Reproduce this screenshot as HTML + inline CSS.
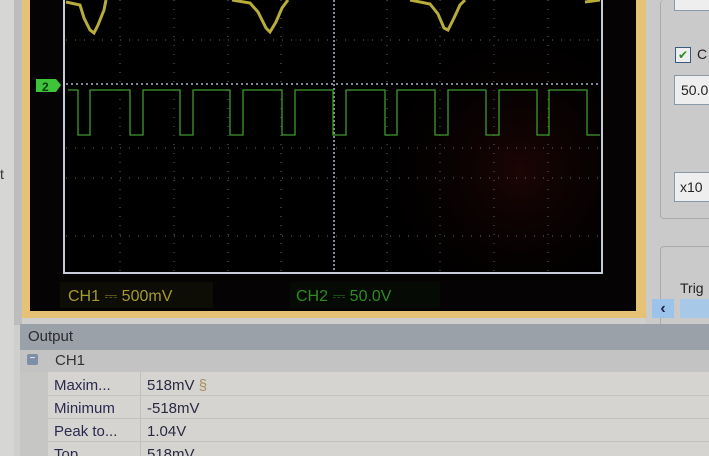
<!DOCTYPE html>
<html><head><style>
html,body{margin:0;width:709px;height:456px;overflow:hidden}
body{background:#cfcfcd;font-family:"Liberation Sans",sans-serif;position:relative}
.a{position:absolute}
</style></head><body>
<div class="a" style="left:0;top:0;width:14px;height:456px;background:#d6d6d4"></div>
<div class="a" style="left:14px;top:0;width:8px;height:325px;background:#bdbdbd"></div>
<div class="a" style="left:0;top:166px;font-size:14px;color:#333">t</div>
<div class="a" style="left:22px;top:0;width:624px;height:318px;background:#e6c277"></div>
<div class="a" style="left:30px;top:0;width:606px;height:311px;background:#050303"></div>
<svg class="a" style="left:0;top:0" width="709" height="320">
<defs><radialGradient id="g" cx="520" cy="170" r="160" gradientUnits="userSpaceOnUse"><stop offset="0" stop-color="#1c0505"/><stop offset="1" stop-color="#000" stop-opacity="0"/></radialGradient></defs>
<rect x="64" y="-2" width="538" height="275" fill="#000" stroke="#c8ccd8" stroke-width="2"/>
<rect x="340" y="0" width="260" height="272" fill="url(#g)"/>
<g stroke="#555" stroke-width="1.2" stroke-dasharray="1 8">
<line x1="66" y1="40" x2="600" y2="40"/><line x1="66" y1="148" x2="600" y2="148"/><line x1="66" y1="178" x2="600" y2="178"/><line x1="66" y1="236" x2="600" y2="236"/>
<line x1="120" y1="0" x2="120" y2="272"/><line x1="174" y1="0" x2="174" y2="272"/><line x1="228" y1="0" x2="228" y2="272"/><line x1="281" y1="0" x2="281" y2="272"/><line x1="387" y1="0" x2="387" y2="272"/><line x1="440" y1="0" x2="440" y2="272"/><line x1="494" y1="0" x2="494" y2="272"/><line x1="548" y1="0" x2="548" y2="272"/>
</g>
<line x1="334" y1="0" x2="334" y2="272" stroke="#aab4cc" stroke-width="1.5" stroke-dasharray="2 2"/>
<line x1="66" y1="84" x2="600" y2="84" stroke="#aab4cc" stroke-width="1.5" stroke-dasharray="2 3"/>
<path d="M68 90H78V135H90V90H130V135H143V90H180V135H193V90H230V135H243V90H282V135H295V90H333V135H346V90H385V135H397V90H435V135H448V90H486V135H499V90H537V135H549V90H587V135H600" fill="none" stroke="#3c9a2c" stroke-width="1.3"/>
<g fill="none" stroke="#b8ad3a" stroke-width="3">
<path d="M66 2L80 5L84 18L90 30L94 33L98 25L104 10L106 0"/>
<path d="M232 0L250 3L258 12L266 28L270 32L276 22L282 8L288 0"/>
<path d="M410 0L430 4L438 14L444 28L448 30L454 18L460 5L465 0"/>
<path d="M585 2L600 0"/>
</g>
<path d="M36 79H56L61 85L56 92H36Z" fill="#3ec43a"/>
<text x="42" y="91" font-size="12" font-weight="bold" fill="#0a3a0a" font-family="Liberation Sans">2</text>
<rect x="60" y="282" width="153" height="26" fill="#0e0d05"/>
<rect x="290" y="282" width="150" height="26" fill="#050a04"/>
<text x="68" y="301" font-size="16" fill="#a69a2c" font-family="Liberation Sans">CH1 ⎓   500mV</text>
<text x="296" y="301" font-size="16" fill="#2f8a22" font-family="Liberation Sans">CH2 ⎓   50.0V</text>
</svg>
<div class="a" style="left:646px;top:0;width:63px;height:325px;background:#cacaca"></div>
<div class="a" style="left:660px;top:0;width:60px;height:218px;border:1px solid #aaa;border-radius:4px;border-top:none"></div>
<div class="a" style="left:660px;top:246px;width:60px;height:80px;border:1px solid #aaa;border-radius:4px"></div>
<div class="a" style="left:674px;top:-2px;width:40px;height:11px;background:#eee;border:1px solid #8899aa"></div>
<div class="a" style="left:675px;top:47px;width:14px;height:14px;background:#eee;border:1px solid #3a5a80;color:#2a8a2a;font-size:12px;line-height:14px;text-align:center">✔</div>
<div class="a" style="left:697px;top:46px;font-size:14px;color:#222">C</div>
<div class="a" style="left:674px;top:75px;width:40px;height:28px;background:#eee;border:1px solid #8899aa;font-size:14px;line-height:28px;padding-left:6px;color:#222">50.0</div>
<div class="a" style="left:674px;top:172px;width:40px;height:28px;background:#eee;border:1px solid #8899aa;font-size:14px;line-height:28px;padding-left:5px;color:#222">x10</div>
<div class="a" style="left:680px;top:280px;font-size:14px;color:#222">Trig</div>
<div class="a" style="left:652px;top:299px;width:22px;height:19px;background:#9cc4ea;color:#224;font-size:16px;font-weight:bold;text-align:center;line-height:19px">‹</div>
<div class="a" style="left:680px;top:299px;width:30px;height:19px;background:#a8c8e8"></div>
<div class="a" style="left:20px;top:324px;width:689px;height:26px;background:#9aa1a8;font-size:15px;color:#2a2a30;line-height:26px;padding-left:8px;box-sizing:border-box">Output</div>
<div class="a" style="left:20px;top:350px;width:689px;height:22px;background:#c3c3c3"></div>
<div class="a" style="left:27px;top:354px;width:11px;height:11px;background:#7e8ea6;border-radius:2px;color:#fff;font-size:10px;line-height:10px;text-align:center">−</div>
<div class="a" style="left:55px;top:352px;font-size:15px;color:#333">CH1</div>
<div class="a" style="left:20px;top:372px;width:28px;height:84px;background:#c6c6c4"></div>
<div class="a" style="left:48px;top:372px;width:661px;height:84px;background:#d5d4d0"></div>
<div class="a" style="left:140px;top:372px;width:1px;height:84px;background:#bfbfbb"></div>
<div class="a" style="left:48px;top:395px;width:661px;height:1px;background:#c2c2be"></div>
<div class="a" style="left:48px;top:418px;width:661px;height:1px;background:#c2c2be"></div>
<div class="a" style="left:48px;top:441px;width:661px;height:1px;background:#c2c2be"></div>
<div class="a" style="left:54px;top:374px;font-size:15px;color:#2a2a50;line-height:23px">Maxim...<br>Minimum<br>Peak to...<br>Top</div>
<div class="a" style="left:147px;top:374px;font-size:15px;color:#2a2a40;line-height:23px">518mV <span style="color:#a89060">§</span><br>-518mV<br>1.04V<br>518mV</div>
</body></html>
